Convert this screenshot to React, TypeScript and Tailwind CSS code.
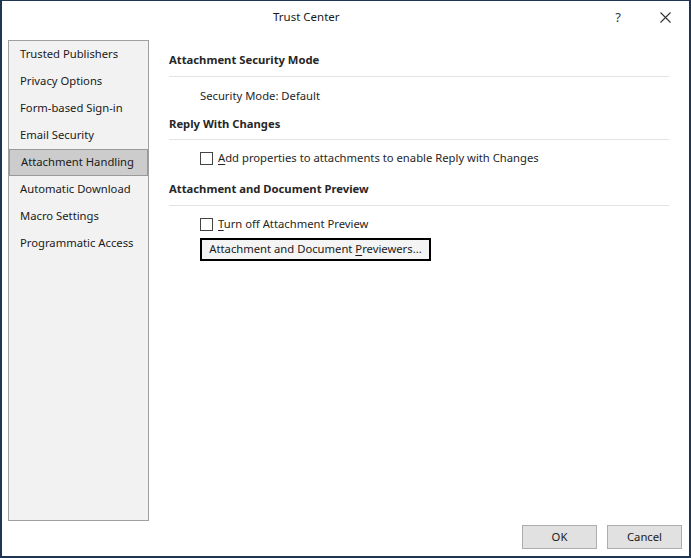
import React from "react";

const navItems = [
  "Trusted Publishers",
  "Privacy Options",
  "Form-based Sign-in",
  "Email Security",
  "Attachment Handling",
  "Automatic Download",
  "Macro Settings",
  "Programmatic Access",
];

function Checkbox() {
  return <span className="inline-block w-[13px] h-[13px] border border-[#444444] bg-white shrink-0" />;
}

export default function App() {
  const selected = "Attachment Handling";

  return (
    <div
      className="w-[691px] h-[558px] bg-white border-t border-x-2 border-b-2 border-[#1f3556] flex flex-col text-[11.25px] text-[#262626]"
      style={{ fontFamily: '"Noto Sans", "Liberation Sans", sans-serif' }}
    >
      {/* Title bar */}
      <div className="h-[39px] flex items-start pt-[8px] shrink-0">
        <span className="ml-[271px] text-[11.5px] leading-[16px] text-[#1a1a1a]">Trust Center</span>
        <span className="ml-auto mr-[39px] text-[13px] leading-[16px] text-[#333]">?</span>
        <svg width="11" height="11" viewBox="0 0 11 11" className="mr-[18px] mt-[3px]">
          <path d="M0.5 0.5 L10.5 10.5 M10.5 0.5 L0.5 10.5" stroke="#333" strokeWidth="1.1" />
        </svg>
      </div>

      {/* Body */}
      <div className="flex h-[481px] shrink-0">
        {/* Navigation */}
        <div className="ml-[6px] w-[141px] h-full bg-[#f2f2f2] border border-[#a0a0a0] flex flex-col">
          {navItems.map((item) => (
            <div
              key={item}
              className={`h-[27px] flex items-center pl-[11px] text-[#1a1a1a] ${
                item === selected ? "bg-[#cccccc] border border-[#999999] pl-[10px]" : ""
              }`}
            >
              {item}
            </div>
          ))}
        </div>

        {/* Content */}
        <div className="ml-[20px] w-[500px] pt-[12px] flex flex-col">
          <div className="leading-[16px] pb-[8px] border-b border-[#e3e3e3] font-bold">
            Attachment Security Mode
          </div>
          <div className="mt-[11px] leading-[16px] pl-[31px]">Security Mode: Default</div>

          <div className="mt-[12px] leading-[16px] pb-[7px] border-b border-[#e3e3e3] font-bold">
            Reply With Changes
          </div>
          <div className="mt-[10px] leading-[16px] pl-[31px] flex items-center gap-[5px]">
            <Checkbox />
            <span>
              <span className="underline underline-offset-2">A</span>dd properties to attachments to enable Reply
              with Changes
            </span>
          </div>

          <div className="mt-[15px] leading-[16px] pb-[8px] border-b border-[#e3e3e3] font-bold">
            Attachment and Document Preview
          </div>
          <div className="mt-[10px] leading-[16px] pl-[31px] flex items-center gap-[5px]">
            <Checkbox />
            <span>
              <span className="underline underline-offset-2">T</span>urn off Attachment Preview
            </span>
          </div>
          <div className="mt-[6px] pl-[31px]">
            <button className="w-[231px] h-[23px] border-2 border-black bg-[#f4f4f4] flex items-center justify-center text-[11.25px] text-[#1a1a1a]">
              Attachment and Document&nbsp;
              <span className="underline underline-offset-2">P</span>reviewers...
            </button>
          </div>
        </div>
      </div>

      {/* Footer */}
      <div className="flex justify-end gap-[10px] pr-[7px] mt-[4px]">
        <button className="w-[75px] h-[24px] bg-[#e1e1e1] border border-[#adadad] text-[#1a1a1a]">OK</button>
        <button className="w-[75px] h-[24px] bg-[#e1e1e1] border border-[#adadad] text-[#1a1a1a]">Cancel</button>
      </div>
    </div>
  );
}
